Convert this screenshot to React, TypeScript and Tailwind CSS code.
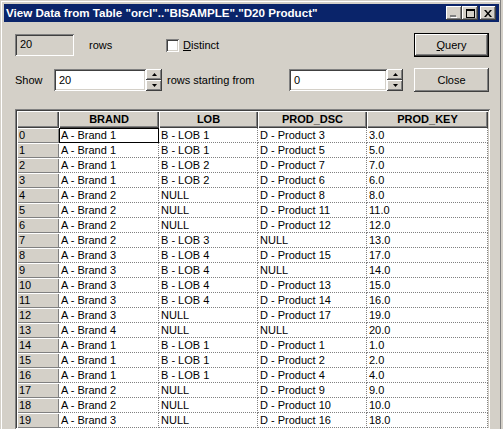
const sunken =
  "shadow-[inset_1px_1px_#808080,inset_-1px_-1px_#ffffff,inset_2px_2px_#404040,inset_-2px_-2px_#d4d0c8]";
const raised =
  "shadow-[inset_-1px_-1px_#404040,inset_1px_1px_#ffffff,inset_-2px_-2px_#808080,inset_2px_2px_#d4d0c8]";

const rows: [string, string, string, string][] = [
  ["A - Brand 1", "B - LOB 1", "D - Product 3", "3.0"],
  ["A - Brand 1", "B - LOB 1", "D - Product 5", "5.0"],
  ["A - Brand 1", "B - LOB 2", "D - Product 7", "7.0"],
  ["A - Brand 1", "B - LOB 2", "D - Product 6", "6.0"],
  ["A - Brand 2", "NULL", "D - Product 8", "8.0"],
  ["A - Brand 2", "NULL", "D - Product 11", "11.0"],
  ["A - Brand 2", "NULL", "D - Product 12", "12.0"],
  ["A - Brand 2", "B - LOB 3", "NULL", "13.0"],
  ["A - Brand 3", "B - LOB 4", "D - Product 15", "17.0"],
  ["A - Brand 3", "B - LOB 4", "NULL", "14.0"],
  ["A - Brand 3", "B - LOB 4", "D - Product 13", "15.0"],
  ["A - Brand 3", "B - LOB 4", "D - Product 14", "16.0"],
  ["A - Brand 3", "NULL", "D - Product 17", "19.0"],
  ["A - Brand 4", "NULL", "NULL", "20.0"],
  ["A - Brand 1", "B - LOB 1", "D - Product 1", "1.0"],
  ["A - Brand 1", "B - LOB 1", "D - Product 2", "2.0"],
  ["A - Brand 1", "B - LOB 1", "D - Product 4", "4.0"],
  ["A - Brand 2", "NULL", "D - Product 9", "9.0"],
  ["A - Brand 2", "NULL", "D - Product 10", "10.0"],
  ["A - Brand 3", "NULL", "D - Product 16", "18.0"],
];

function Spinner() {
  return (
    <div className="flex h-[22px] w-[16px] flex-col">
      <div className={`flex h-[11px] items-center justify-center bg-[#d4d0c8] ${raised}`}>
        <svg width="5" height="3" viewBox="0 0 5 3">
          <path d="M2.5 0 L5 3 L0 3 Z" fill="#000" />
        </svg>
      </div>
      <div className={`flex h-[11px] items-center justify-center bg-[#d4d0c8] ${raised}`}>
        <svg width="5" height="3" viewBox="0 0 5 3">
          <path d="M0 0 L5 0 L2.5 3 Z" fill="#000" />
        </svg>
      </div>
    </div>
  );
}

function TitleButton({ children, className = "" }: { children: React.ReactNode; className?: string }) {
  return (
    <div className={`flex h-[14px] w-[16px] items-center justify-center bg-[#d4d0c8] ${raised} ${className}`}>
      {children}
    </div>
  );
}

const widths = ["w-[100px]", "w-[99px]", "w-[109px]", "w-[121px]"];

export default function App() {
  return (
    <div className="h-[429px] w-[503px] overflow-hidden bg-[#d4d0c8] font-['Liberation_Sans',Arial,sans-serif] text-[11px] text-black">
      <div className="flex h-full w-[501px] flex-col border-r border-[#808080] pl-[4px] pr-[1px] pt-[4px] shadow-[inset_1px_1px_#d4d0c8,inset_2px_2px_#ffffff]">
        {/* title bar */}
        <div className="flex h-[18px] shrink-0 items-center bg-[#0a246a] pl-[2px] pr-[3px]">
          <span className="text-[11.6px] font-bold text-white">
            {'View Data from Table "orcl".."BISAMPLE"."D20 Product"'}
          </span>
          <div className="ml-auto flex items-center">
            <TitleButton>
              <svg width="8" height="3" viewBox="0 0 8 3" className="mt-[6px]">
                <rect x="0" y="0" width="6" height="2" fill="#808080" />
                <rect x="1" y="2" width="6" height="1" fill="#ffffff" />
              </svg>
            </TitleButton>
            <TitleButton>
              <svg width="9" height="9" viewBox="0 0 9 9">
                <rect x="0.5" y="0.5" width="8" height="8" fill="none" stroke="#000" />
                <rect x="0" y="1" width="9" height="1" fill="#000" />
              </svg>
            </TitleButton>
            <TitleButton className="ml-[2px]">
              <svg width="8" height="7" viewBox="0 0 8 7">
                <path d="M0 0 L2 0 L4 2.5 L6 0 L8 0 L5 3.5 L8 7 L6 7 L4 4.5 L2 7 L0 7 L3 3.5 Z" fill="#000" />
              </svg>
            </TitleButton>
          </div>
        </div>

        <div className="flex min-h-0 flex-1 flex-col pl-[11px] pr-[9px]">
          {/* row 1 */}
          <div className="mt-[11px] flex h-[24px] shrink-0 items-center">
            <div className={`flex h-[22px] w-[59px] items-center pb-[1px] pl-[5px] ${sunken}`}>20</div>
            <span className="ml-[15px] w-[77px]">rows</span>
            <div className={`h-[13px] w-[13px] bg-white ${sunken}`} />
            <span className="ml-[4px]">
              <span className="underline">D</span>istinct
            </span>
            <button className="ml-auto mr-[1px] h-[24px] w-[75px] border border-black">
              <div className={`flex h-full w-full items-center justify-center bg-[#d4d0c8] ${raised}`}>
                <span>
                  <span className="underline">Q</span>uery
                </span>
              </div>
            </button>
          </div>

          {/* row 2 */}
          <div className="mt-[11px] flex h-[24px] shrink-0 items-center">
            <span className="w-[39px]">Show</span>
            <div className={`flex h-[22px] w-[92px] items-center bg-white pl-[5px] ${sunken}`}>20</div>
            <Spinner />
            <span className="ml-[5px] w-[122px]">rows starting from</span>
            <div className={`flex h-[22px] w-[98px] items-center bg-white pl-[5px] ${sunken}`}>0</div>
            <Spinner />
            <button
              className={`ml-auto mr-[1px] flex h-[24px] w-[75px] items-center justify-center bg-[#d4d0c8] ${raised}`}
            >
              Close
            </button>
          </div>

          {/* data grid */}
          <div className={`mt-[17px] min-h-0 w-[475px] flex-1 overflow-hidden p-[2px] ${sunken}`}>
            <div className="flex h-[17px]">
              <div className="w-[42px] bg-[#d4d0c8] shadow-[inset_1px_1px_#ffffff,inset_-1px_-1px_#404040,inset_-2px_-2px_#808080]" />
              {["BRAND", "LOB", "PROD_DSC", "PROD_KEY"].map((h, i) => (
                <div
                  key={h}
                  className={`${widths[i]} bg-[#d4d0c8] text-center font-bold leading-[17px] shadow-[inset_1px_1px_#ffffff,inset_-1px_-1px_#404040,inset_-2px_-2px_#808080]`}
                >
                  {h}
                </div>
              ))}
            </div>
            {rows.map((r, ri) => (
              <div key={ri} className="flex h-[15px]">
                <div className="w-[42px] bg-[#d4d0c8] pl-[2px] leading-[15px] shadow-[inset_1px_1px_#ffffff,inset_-1px_-1px_#808080]">
                  {ri}
                </div>
                {r.map((c, ci) =>
                  ri === 0 && ci === 0 ? (
                    <div
                      key={ci}
                      className={`${widths[ci]} border border-black bg-white pl-[1px] leading-[13px]`}
                    >
                      {c}
                    </div>
                  ) : (
                    <div
                      key={ci}
                      className={`${widths[ci]} border-b border-r border-dotted border-[#808080] bg-white pl-[2px] leading-[14px]`}
                    >
                      {c}
                    </div>
                  )
                )}
              </div>
            ))}
          </div>
        </div>
      </div>
    </div>
  );
}
